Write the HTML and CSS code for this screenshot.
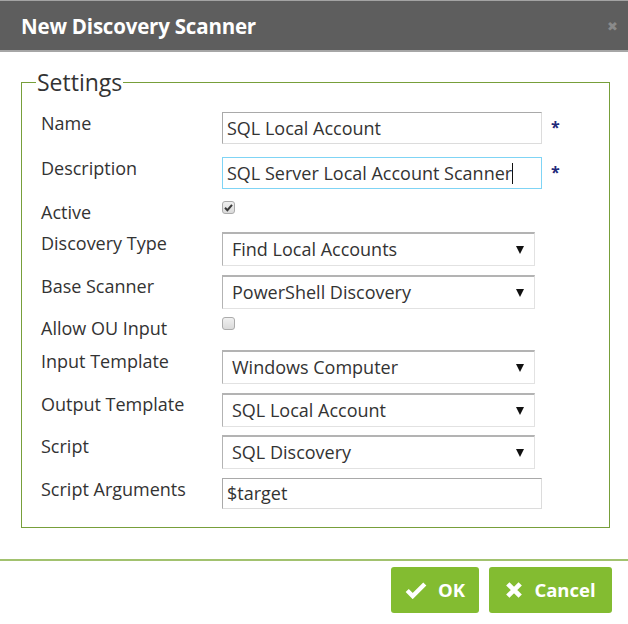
FILE: index.html
```html
<!DOCTYPE html>
<html>
<head>
<meta charset="utf-8">
<link rel="stylesheet" href="styles.css">
</head>
<body>
<div class="dialog">
  <div class="header">
    <span class="title">New Discovery Scanner</span>
    <span class="close">&#x2716;</span>
  </div>
  <fieldset class="settings">
    <legend>Settings</legend>
    <div class="row row-text">
      <label class="lbl">Name</label>
      <div class="field"><div class="input">SQL Local Account</div><span class="req">*</span></div>
    </div>
    <div class="row row-text2">
      <label class="lbl">Description</label>
      <div class="field"><div class="input focus">SQL Server Local Account Scanner<span class="caret"></span></div><span class="req">*</span></div>
    </div>
    <div class="row row-check">
      <label class="lbl">Active</label>
      <div class="field"><span class="check on"><svg viewBox="0 0 13 13" width="13" height="13"><path d="M3 6.8 L5.4 9.2 L10 3.8" fill="none" stroke="#3a3a3a" stroke-width="2"/></svg></span></div>
    </div>
    <div class="row row-sel">
      <label class="lbl">Discovery Type</label>
      <div class="field"><div class="select">Find Local Accounts<span class="arrow"></span></div></div>
    </div>
    <div class="row row-sel">
      <label class="lbl">Base Scanner</label>
      <div class="field"><div class="select">PowerShell Discovery<span class="arrow"></span></div></div>
    </div>
    <div class="row row-check2">
      <label class="lbl">Allow OU Input</label>
      <div class="field"><span class="check"></span></div>
    </div>
    <div class="row row-sel">
      <label class="lbl">Input Template</label>
      <div class="field"><div class="select">Windows Computer<span class="arrow"></span></div></div>
    </div>
    <div class="row row-sel">
      <label class="lbl">Output Template</label>
      <div class="field"><div class="select">SQL Local Account<span class="arrow"></span></div></div>
    </div>
    <div class="row row-sel">
      <label class="lbl">Script</label>
      <div class="field"><div class="select">SQL Discovery<span class="arrow"></span></div></div>
    </div>
    <div class="row row-last">
      <label class="lbl">Script Arguments</label>
      <div class="field"><div class="input short">$target</div></div>
    </div>
  </fieldset>
  <div class="footer">
    <button class="btn btn-ok"><svg viewBox="0 0 20 16" width="22" height="18"><path d="M2 8.5 L7 13.5 L18 2.5" fill="none" stroke="#fff" stroke-width="4" stroke-linejoin="miter"/></svg>OK</button>
    <button class="btn btn-cancel"><svg viewBox="0 0 16 16" width="18" height="18"><path d="M2.5 2.5 L13.5 13.5 M13.5 2.5 L2.5 13.5" fill="none" stroke="#fff" stroke-width="4.2"/></svg>Cancel</button>
  </div>
</div>
</body>
</html>
```
FILE: styles.css
```css
html, body {
  margin: 0;
  padding: 0;
  background: #fff;
}
body {
  font-family: "Open Sans", "Liberation Sans", sans-serif;
  color: #333;
}
.dialog {
  width: 628px;
}
.header {
  height: 49px;
  background: #5e5e5e;
  border-top: 1px solid #a3a3a3;
  border-bottom: 2px solid #a6a6a6;
  display: flex;
  align-items: center;
  justify-content: space-between;
  padding: 0 10px 0 21px;
}
.title {
  color: #fff;
  font-weight: 700;
  font-size: 20.5px;
  letter-spacing: -0.2px;
  margin-top: 1px;
}
.close {
  color: #8a8a8a;
  font-size: 13px;
  margin-top: 1px;
}
.settings {
  margin: 15px 0 0 21px;
  box-sizing: border-box;
  width: 589px;
  border: 1px solid #779f3a;
  padding: 15px 10px 18px 19px;
  min-width: 0;
}
.settings legend {
  font-size: 23px;
  line-height: 30px;
  padding: 0 1px;
  margin-left: -5px;
  margin-top: -3px;
  color: #333;
}
.row {
  display: flex;
  align-items: flex-start;
  margin-bottom: 8px;
}
.row-text { margin-bottom: 13px; }
.row-text2 { margin-bottom: 12px; }
.row-sel { margin-bottom: 8.5px; }
.row-last { margin-bottom: 0; }
.lbl {
  width: 181px;
  flex: none;
  font-size: 18px;
  line-height: 22px;
  color: #333;
}
.field {
  display: flex;
  align-items: flex-start;
}
.input {
  box-sizing: border-box;
  width: 320px;
  height: 32px;
  border: 1px solid #dcdcdc;
  border-top-color: #a9a9a9;
  border-left-color: #a9a9a9;
  font-size: 18px;
  line-height: 30px;
  padding: 0 4px;
  color: #333;
  white-space: nowrap;
}
.input.focus {
  border: 1px solid #7fd4f5;
}
.input.short {
  height: 31px;
  line-height: 29px;
}
.caret {
  display: inline-block;
  width: 1px;
  height: 21px;
  background: #111;
  vertical-align: -4px;
}
.req {
  color: #1f2a7a;
  font-weight: 700;
  font-size: 16px;
  line-height: 30px;
  margin-left: 9px;
}
.select {
  box-sizing: border-box;
  position: relative;
  width: 313px;
  height: 34px;
  border: 1px solid #e2e2e2;
  border-top: 2px solid #b3b3b3;
  border-left: 1px solid #b3b3b3;
  font-size: 18px;
  line-height: 30px;
  padding: 0 9px;
  color: #333;
}
.arrow {
  position: absolute;
  right: 10px;
  top: 12px;
  width: 0;
  height: 0;
  border-left: 4px solid transparent;
  border-right: 4px solid transparent;
  border-top: 8px solid #111;
}
.row-check .field { height: 31px; }
.row-check2 .field { height: 33px; }
.row-check, .row-check2 { margin-bottom: 0; }
.check {
  display: block;
  box-sizing: border-box;
  width: 13px;
  height: 13px;
  border: 1px solid #ababab;
  border-radius: 3px;
  background: linear-gradient(#f0f0f0, #dadada);
}
.check svg { display: block; margin: -1px; }
.footer {
  margin-top: 31px;
  border-top: 2px solid #a2c26f;
  display: flex;
  justify-content: flex-end;
  gap: 10px;
  padding: 6px 16px 0 0;
}
.btn {
  display: flex;
  align-items: center;
  justify-content: center;
  gap: 11px;
  height: 46px;
  border: none;
  border-radius: 3px;
  background: #83bc31;
  color: #fff;
  font-family: "Open Sans", "Liberation Sans", sans-serif;
  font-weight: 700;
  font-size: 18.5px;
  padding: 0;
}
.btn-ok { width: 88px; }
.btn-cancel { width: 123px; }
```
